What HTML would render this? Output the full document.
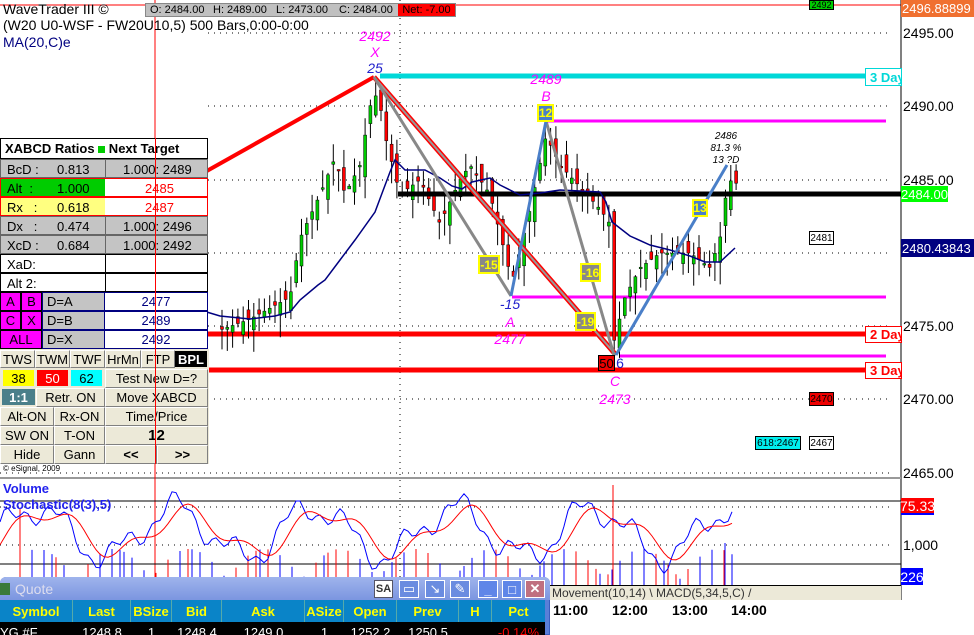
<!DOCTYPE html>
<html><head><meta charset="utf-8"><style>
*{margin:0;padding:0;box-sizing:border-box}
body{width:974px;height:635px;overflow:hidden;background:#fff;font-family:"Liberation Sans",Arial,sans-serif;position:relative}
.a{position:absolute;white-space:nowrap}
.c{position:absolute;display:flex;align-items:center;justify-content:center;font-size:13px;white-space:nowrap}
.btn{background:#ece9d8;border:1px solid;border-color:#fff #808080 #808080 #fff;color:#000}
.pl{position:absolute;left:0;width:208px;font-size:13px}
.ax{position:absolute;left:903px;font-size:14px;color:#000}
</style></head><body>
<svg class="a" style="left:0;top:0" width="974" height="635" id="sv">
<line x1="0" y1="5" x2="901" y2="5" stroke="#f00" stroke-width="1"/>
<line x1="901" y1="0" x2="901" y2="600" stroke="#000" stroke-width="1"/>
<line x1="0" y1="478" x2="901" y2="478" stroke="#999" stroke-width="2"/>
<line x1="155" y1="0" x2="155" y2="580" stroke="#f00" stroke-width="1"/>
<g stroke="#000" stroke-dasharray="1 5" stroke-width="1">
<line x1="208" y1="33" x2="890" y2="33"/><line x1="208" y1="106" x2="890" y2="106"/>
<line x1="208" y1="180" x2="890" y2="180"/><line x1="208" y1="253" x2="890" y2="253"/>
<line x1="208" y1="326" x2="890" y2="326"/><line x1="208" y1="399" x2="890" y2="399"/>
<line x1="0" y1="473" x2="890" y2="473"/>
<line x1="400" y1="0" x2="400" y2="585"/>
<line x1="0" y1="507" x2="890" y2="507"/><line x1="0" y1="545" x2="890" y2="545"/>
</g>
<line x1="0" y1="501" x2="901" y2="501" stroke="#000"/>
<line x1="0" y1="564" x2="901" y2="564" stroke="#000"/>
<line x1="380" y1="76" x2="866" y2="76" stroke="#00d8d8" stroke-width="5"/>
<line x1="545" y1="121" x2="886" y2="121" stroke="#f0f" stroke-width="3"/>
<line x1="512" y1="297" x2="886" y2="297" stroke="#f0f" stroke-width="3"/>
<line x1="620" y1="356" x2="886" y2="356" stroke="#f0f" stroke-width="3"/>
<line x1="0" y1="334" x2="866" y2="334" stroke="#f00" stroke-width="5"/>
<line x1="0" y1="370" x2="866" y2="370" stroke="#f00" stroke-width="5"/>
<g id="cand"></g>
<line x1="398" y1="194" x2="901" y2="194" stroke="#000" stroke-width="5"/>
<polyline fill="none" stroke="#000080" stroke-width="1.5" points="200,310 220,316 250,319 275,316 290,312 300,300 318,285 325,280 340,260 355,240 375,212 390,172 395,160 405,170 425,170 440,178 452,186 462,189 472,182 490,178 500,185 510,190 520,195 540,193 560,190 600,192 606,202 612,222 630,236 650,245 670,250 690,256 705,262 720,262 735,248"/>
<line x1="205" y1="172" x2="374" y2="77" stroke="#f00" stroke-width="4"/>
<line x1="374" y1="77" x2="616" y2="355" stroke="#f00" stroke-width="5"/>
<line x1="374" y1="77" x2="616" y2="355" stroke="#999" stroke-width="2"/>
<line x1="374" y1="77" x2="511" y2="296" stroke="#888" stroke-width="3"/>
<line x1="546" y1="121" x2="614" y2="355" stroke="#888" stroke-width="3"/>
<line x1="511" y1="296" x2="546" y2="121" stroke="#4a7fc8" stroke-width="3"/>
<line x1="616" y1="355" x2="727" y2="165" stroke="#4a7fc8" stroke-width="3"/>
<g id="stoch"></g>
<g font-family="Liberation Sans" font-style="italic" font-size="14" text-anchor="middle">
<text x="375" y="41" fill="#f0f">2492</text><text x="375" y="57" fill="#f0f">X</text><text x="375" y="73" fill="#22c">25</text>
<text x="546" y="84" fill="#f0f">2489</text><text x="546" y="101" fill="#f0f">B</text>
<text x="510" y="309" fill="#22c">-15</text><text x="510" y="327" fill="#f0f">A</text><text x="510" y="344" fill="#f0f">2477</text>
<text x="615" y="386" fill="#f0f">C</text><text x="615" y="404" fill="#f0f">2473</text>
<text x="620" y="368" fill="#22c" font-style="normal">6</text>
</g>
<g font-family="Liberation Sans" font-style="italic" font-size="10" text-anchor="middle" fill="#000">
<text x="726" y="139">2486</text><text x="726" y="151">81.3 %</text><text x="726" y="163">13 ?D</text>
</g>
</svg>
<div class="c" style="left:537px;top:104px;width:17px;height:18px;background:#4a7fc8;border:2px solid #ff0;color:#ff0;font-weight:bold;font-size:12px">12</div>
<div class="c" style="left:478px;top:255px;width:22px;height:19px;background:#888;border:2px solid #ff0;color:#ff0;font-weight:bold;font-size:12px">-15</div>
<div class="c" style="left:580px;top:263px;width:21px;height:19px;background:#888;border:2px solid #ff0;color:#ff0;font-weight:bold;font-size:12px">-16</div>
<div class="c" style="left:575px;top:312px;width:21px;height:19px;background:#888;border:2px solid #ff0;color:#ff0;font-weight:bold;font-size:12px">-19</div>
<div class="c" style="left:692px;top:199px;width:16px;height:18px;background:#4a7fc8;border:2px solid #ff0;color:#ff0;font-weight:bold;font-size:12px">13</div>
<div class="c" style="left:598px;top:355px;width:17px;height:16px;background:#e00;border:1px solid #000;color:#000;font-size:13px">50</div>
<div class="c" style="left:865px;top:68px;width:37px;height:18px;background:#fff;border:1px solid #00d8d8;color:#00d8d8;font-weight:bold;justify-content:flex-start;padding-left:4px;overflow:hidden">3 Day</div>
<div class="c" style="left:865px;top:326px;width:37px;height:17px;background:#fff;border:1px solid #f00;color:#f00;font-weight:bold;justify-content:flex-start;padding-left:4px;overflow:hidden">2 Day</div>
<div class="c" style="left:865px;top:362px;width:37px;height:17px;background:#fff;border:1px solid #f00;color:#f00;font-weight:bold;justify-content:flex-start;padding-left:4px;overflow:hidden">3 Day</div>
<div class="c" style="left:809px;top:0;width:25px;height:10px;background:#0c0;border:1px solid #000;font-size:9px;overflow:hidden">2492</div>
<div class="c" style="left:809px;top:231px;width:25px;height:14px;background:#fff;border:1px solid #000;font-size:10px">2481</div>
<div class="c" style="left:809px;top:392px;width:25px;height:14px;background:#e00;border:1px solid #000;font-size:10px">2470</div>
<div class="c" style="left:755px;top:436px;width:46px;height:14px;background:#0ee;border:1px solid #000;font-size:10px">618:2467</div>
<div class="c" style="left:809px;top:436px;width:25px;height:14px;background:#fff;border:1px solid #000;font-size:10px">2467</div>
<div class="c" style="left:901px;top:0;width:73px;height:17px;background:#f07030;color:#fff;font-size:13px;overflow:hidden;justify-content:flex-start;padding-left:1px">2496.88899</div>
<div class="ax" style="top:25px">2495.00</div>
<div class="ax" style="top:98px">2490.00</div>
<div class="ax" style="top:172px">2485.00</div>
<div class="c" style="left:901px;top:186px;width:47px;height:16px;background:#0f0;color:#fff;font-size:13px">2484.00</div>
<div class="c" style="left:901px;top:239px;width:73px;height:18px;background:#000080;color:#fff;font-size:13px;overflow:hidden;justify-content:flex-start;padding-left:1px">2480.43843</div>
<div class="ax" style="top:318px">2475.00</div>
<div class="ax" style="top:391px">2470.00</div>
<div class="ax" style="top:465px">2465.00</div>
<div class="c" style="left:901px;top:498px;width:33px;height:17px;background:#f00;color:#fff;font-size:14px;border-bottom:2px solid #00f">75.33</div>
<div class="ax" style="top:537px">1,000</div>
<div class="c" style="left:901px;top:568px;width:22px;height:17px;background:#00f;color:#fff;font-size:14px">226</div>
<div class="a" style="left:548px;top:585px;width:353px;height:15px;background:#ece9d8;border-top:1px solid #000;font-size:12px;color:#333;padding-left:4px;line-height:14px">Movement(10,14)&nbsp;\&nbsp;MACD(5,34,5,C)&nbsp;/</div>
<div class="a" style="left:553px;top:602px;font-size:14px;font-weight:bold">11:00</div>
<div class="a" style="left:612px;top:602px;font-size:14px;font-weight:bold">12:00</div>
<div class="a" style="left:672px;top:602px;font-size:14px;font-weight:bold">13:00</div>
<div class="a" style="left:731px;top:602px;font-size:14px;font-weight:bold">14:00</div>
<div class="a" style="left:3px;top:1px;font-size:14px">WaveTrader III ©</div>
<div class="a" style="left:145px;top:3px;width:311px;height:14px;background:#c0c0c0;border:1px solid #888;font-size:11px;line-height:12px"></div>
<div class="a" style="left:150px;top:4px;font-size:11px">O: 2484.00</div>
<div class="a" style="left:213px;top:4px;font-size:11px">H: 2489.00</div>
<div class="a" style="left:276px;top:4px;font-size:11px">L: 2473.00</div>
<div class="a" style="left:339px;top:4px;font-size:11px">C: 2484.00</div>
<div class="c" style="left:398px;top:4px;width:57px;height:12px;background:#f00;font-size:11px">Net: -7.00</div>
<div class="a" style="left:3px;top:17px;font-size:14px">(W20 U0-WSF - FW20U10,5) 500 Bars,0:00-0:00</div>
<div class="a" style="left:3px;top:34px;font-size:14px;color:#000080">MA(20,C)e</div>
<div class="a" style="left:3px;top:481px;font-size:13px;font-weight:bold;color:#22e">Volume</div>
<div class="a" style="left:3px;top:497px;font-size:13px;font-weight:bold;color:#22e">Stochastic(8(3),5)</div>
<div class="a" style="left:3px;top:464px;font-size:8px">© eSignal, 2009</div>
<div class="pl" style="top:138px;height:21px;background:#fff;border:1px solid #000;font-weight:bold;padding:2px 4px;font-size:13px">XABCD Ratios <span style="display:inline-block;width:7px;height:7px;background:#0c0"></span> Next Target</div>
<div class="pl" style="top:159px;height:19px;background:#c4c4c4;border:1px solid #666"><span class="a" style="left:6px;top:2px">BcD :</span><span class="a" style="left:56px;top:2px">0.813</span><span class="a" style="left:104px;top:-1px;width:104px;height:19px;border-left:1px solid #666"></span><span class="a" style="left:122px;top:2px">1.000: 2489</span></div>
<div class="pl" style="top:178px;height:19px;background:#fff;border:1px solid #f00"><span class="a" style="left:0;top:0;width:104px;height:17px;background:#0c0"></span><span class="a" style="left:6px;top:2px">Alt&nbsp; :</span><span class="a" style="left:56px;top:2px">1.000</span><span class="a" style="left:144px;top:2px;color:#f00">2485</span></div>
<div class="pl" style="top:197px;height:19px;background:#fff;border:1px solid #f00"><span class="a" style="left:0;top:0;width:104px;height:17px;background:#ffff80"></span><span class="a" style="left:6px;top:2px">Rx&nbsp;&nbsp; :</span><span class="a" style="left:56px;top:2px">0.618</span><span class="a" style="left:144px;top:2px;color:#f00">2487</span></div>
<div class="pl" style="top:216px;height:19px;background:#c4c4c4;border:1px solid #666"><span class="a" style="left:6px;top:2px">Dx&nbsp;&nbsp; :</span><span class="a" style="left:56px;top:2px">0.474</span><span class="a" style="left:104px;top:-1px;width:1px;height:19px;background:#666"></span><span class="a" style="left:122px;top:2px">1.000: 2496</span></div>
<div class="pl" style="top:235px;height:19px;background:#c4c4c4;border:1px solid #666"><span class="a" style="left:6px;top:2px">XcD :</span><span class="a" style="left:56px;top:2px">0.684</span><span class="a" style="left:104px;top:-1px;width:1px;height:19px;background:#666"></span><span class="a" style="left:122px;top:2px">1.000: 2492</span></div>
<div class="pl" style="top:254px;height:19px;background:#fff;border:1px solid #000"><span class="a" style="left:6px;top:2px">XaD:</span><span class="a" style="left:104px;top:-1px;width:1px;height:19px;background:#000"></span></div>
<div class="pl" style="top:273px;height:19px;background:#fff;border:1px solid #000"><span class="a" style="left:6px;top:2px">Alt 2:</span><span class="a" style="left:104px;top:-1px;width:1px;height:19px;background:#000"></span></div>
<div class="c" style="left:0;top:292px;width:21px;height:19px;background:#f0f;border:1px solid #000">A</div>
<div class="c" style="left:21px;top:292px;width:21px;height:19px;background:#f0f;border:1px solid #000">B</div>
<div class="c" style="left:0;top:311px;width:21px;height:19px;background:#f0f;border:1px solid #000">C</div>
<div class="c" style="left:21px;top:311px;width:21px;height:19px;background:#f0f;border:1px solid #000">X</div>
<div class="c" style="left:0;top:330px;width:42px;height:19px;background:#f0f;border:1px solid #000">ALL</div>
<div class="c" style="left:42px;top:292px;width:63px;height:19px;background:#c4c4c4;border:1px solid #000080;justify-content:flex-start;padding-left:4px">D=A</div>
<div class="c" style="left:42px;top:311px;width:63px;height:19px;background:#c4c4c4;border:1px solid #000080;justify-content:flex-start;padding-left:4px">D=B</div>
<div class="c" style="left:42px;top:330px;width:63px;height:19px;background:#c4c4c4;border:1px solid #000080;justify-content:flex-start;padding-left:4px">D=X</div>
<div class="c" style="left:104px;top:292px;width:104px;height:19px;background:#fff;border:1px solid #000080;color:#000080">2477</div>
<div class="c" style="left:104px;top:311px;width:104px;height:19px;background:#fff;border:1px solid #000080;color:#000080">2489</div>
<div class="c" style="left:104px;top:330px;width:104px;height:19px;background:#fff;border:1px solid #000080;color:#000080">2492</div>
<div class="a" style="left:0;top:349px;width:209px;height:115px;background:#ece9d8"></div>
<div class="c btn" style="left:0;top:350px;width:35px;height:18px">TWS</div>
<div class="c btn" style="left:35px;top:350px;width:35px;height:18px">TWM</div>
<div class="c btn" style="left:70px;top:350px;width:35px;height:18px">TWF</div>
<div class="c btn" style="left:105px;top:350px;width:36px;height:18px">HrMn</div>
<div class="c btn" style="left:141px;top:350px;width:34px;height:18px">FTP</div>
<div class="c" style="left:175px;top:351px;width:32px;height:16px;background:#000;color:#fff;font-weight:bold">BPL</div>
<div class="c" style="left:3px;top:370px;width:31px;height:16px;background:#ff0">38</div>
<div class="c" style="left:37px;top:370px;width:31px;height:16px;background:#f00;color:#fff">50</div>
<div class="c" style="left:71px;top:370px;width:31px;height:16px;background:#0ff">62</div>
<div class="c btn" style="left:105px;top:369px;width:103px;height:19px">Test New D=?</div>
<div class="c" style="left:2px;top:389px;width:33px;height:16px;background:#4a7f8a;color:#fff;font-weight:bold">1:1</div>
<div class="c btn" style="left:36px;top:388px;width:69px;height:19px">Retr. ON</div>
<div class="c btn" style="left:105px;top:388px;width:103px;height:19px">Move XABCD</div>
<div class="c btn" style="left:0;top:407px;width:54px;height:19px">Alt-ON</div>
<div class="c btn" style="left:54px;top:407px;width:51px;height:19px">Rx-ON</div>
<div class="c btn" style="left:105px;top:407px;width:103px;height:19px">Time/Price</div>
<div class="c btn" style="left:0;top:426px;width:54px;height:19px">SW ON</div>
<div class="c btn" style="left:54px;top:426px;width:51px;height:19px">T-ON</div>
<div class="c btn" style="left:105px;top:426px;width:103px;height:19px;font-weight:bold;font-size:15px">12</div>
<div class="c btn" style="left:0;top:445px;width:54px;height:19px">Hide</div>
<div class="c btn" style="left:54px;top:445px;width:51px;height:19px">Gann</div>
<div class="c btn" style="left:105px;top:445px;width:52px;height:19px;font-weight:bold">&lt;&lt;</div>
<div class="c btn" style="left:157px;top:445px;width:51px;height:19px;font-weight:bold">&gt;&gt;</div>
<div class="a" style="left:155px;top:138px;width:1px;height:326px;background:#f00"></div>
<div class="a" style="left:0;top:577px;width:550px;height:58px;background:#5a7fd8;border-radius:6px 6px 0 0;border:1px solid #3a5fc0"></div>
<div class="a" style="left:0;top:577px;width:550px;height:23px;background:linear-gradient(#9fb4ec,#7b95e0);border-radius:6px 6px 0 0"></div>
<div class="a" style="left:0;top:583px;width:10px;height:12px;background:#3a7a3a"></div>
<div class="a" style="left:15px;top:581px;font-size:14px;color:#dde">Quote</div>
<div class="c" style="left:374px;top:580px;width:19px;height:18px;background:#fff;color:#333;font-weight:bold;font-size:11px;border:1px solid #556">SA</div>
<div class="c" style="left:399px;top:580px;width:20px;height:18px;background:#6a8ce0;border:1px solid #fff;color:#fff">▭</div>
<div class="c" style="left:425px;top:580px;width:20px;height:18px;background:#6a8ce0;border:1px solid #fff;color:#fff">↘</div>
<div class="c" style="left:450px;top:580px;width:20px;height:18px;background:#6a8ce0;border:1px solid #fff;color:#fff">✎</div>
<div class="c" style="left:478px;top:580px;width:20px;height:18px;background:#5f86e8;border:1px solid #fff;color:#fff;font-weight:bold">_</div>
<div class="c" style="left:502px;top:580px;width:20px;height:18px;background:#5f86e8;border:1px solid #fff;color:#fff">□</div>
<div class="c" style="left:525px;top:580px;width:20px;height:18px;background:#c07080;border:1px solid #fff;color:#fff;font-weight:bold">✕</div>
<div class="a" style="left:0;top:600px;width:545px;height:22px;background:#0a84c8;display:flex;font-weight:bold;font-size:13px;color:#ff0">
<div class="c" style="position:relative;width:73px;height:22px;border-right:1px solid #5aa">Symbol</div>
<div class="c" style="position:relative;width:58px;height:22px;border-right:1px solid #5aa">Last</div>
<div class="c" style="position:relative;width:41px;height:22px;border-right:1px solid #5aa">BSize</div>
<div class="c" style="position:relative;width:50px;height:22px;border-right:1px solid #5aa">Bid</div>
<div class="c" style="position:relative;width:83px;height:22px;border-right:1px solid #5aa">Ask</div>
<div class="c" style="position:relative;width:39px;height:22px;border-right:1px solid #5aa">ASize</div>
<div class="c" style="position:relative;width:53px;height:22px;border-right:1px solid #5aa">Open</div>
<div class="c" style="position:relative;width:62px;height:22px;border-right:1px solid #5aa">Prev</div>
<div class="c" style="position:relative;width:33px;height:22px;border-right:1px solid #5aa">H</div>
<div class="c" style="position:relative;width:53px;height:22px">Pct</div>
</div>
<div class="a" style="left:0;top:622px;width:545px;height:13px;background:#000;display:flex;font-size:12px;color:#fff;overflow:hidden">
<div class="c" style="position:relative;width:73px;height:20px;justify-content:flex-start">YG #F</div>
<div class="c" style="position:relative;width:58px;height:20px">1248.8</div>
<div class="c" style="position:relative;width:41px;height:20px">1</div>
<div class="c" style="position:relative;width:50px;height:20px">1248.4</div>
<div class="c" style="position:relative;width:83px;height:20px">1249.0</div>
<div class="c" style="position:relative;width:39px;height:20px">1</div>
<div class="c" style="position:relative;width:53px;height:20px">1252.2</div>
<div class="c" style="position:relative;width:62px;height:20px">1250.5</div>
<div class="c" style="position:relative;width:33px;height:20px"></div>
<div class="c" style="position:relative;width:53px;height:20px;color:#f00">-0.14%</div>
</div>
<script>
function Y(p){return 33+(2495-p)*14.67;}
var kp=[[210,2474.5],[250,2475.5],[290,2477],[300,2481],[320,2484],[335,2486.5],[345,2484],[360,2486],[370,2490],[378,2491],[385,2488],[400,2484],[420,2485],[440,2482],[460,2485],[470,2486],[490,2484],[505,2480],[512,2478],[530,2483],[546,2488],[560,2486],[580,2484.5],[600,2483],[610,2482],[614,2474],[625,2477],[640,2479],[660,2480],[690,2480],[710,2479],[720,2481],[728,2485],[745,2484.5]];
function pr(x){for(var i=0;i<kp.length-1;i++){if(x>=kp[i][0]&&x<=kp[i+1][0]){var t=(x-kp[i][0])/(kp[i+1][0]-kp[i][0]);return kp[i][1]+t*(kp[i+1][1]-kp[i][1]);}}return kp[kp.length-1][1];}
var g=document.getElementById("cand"),h="";
for(var x=222;x<=737;x+=5.3){var c=pr(x),o=pr(x-5.3)+Math.sin(x*1.7)*0.8,up=c>=o,hi=Math.max(o,c)+Math.abs(Math.sin(x*0.9))*1.2,lo=Math.min(o,c)-Math.abs(Math.cos(x*1.3))*1.5;
h+='<line x1="'+x+'" x2="'+x+'" y1="'+Y(hi)+'" y2="'+Y(lo)+'" stroke="#000" stroke-width="1"/>';
var t=Y(Math.max(o,c)),b=Y(Math.min(o,c));if(b-t<1.5)b=t+1.5;
h+='<rect x="'+(x-1.5)+'" y="'+t+'" width="3" height="'+(b-t)+'" fill="'+(up?'#0c0':'#f00')+'" stroke="#000" stroke-width="0.5"/>';}
g.innerHTML=h;
var s=document.getElementById("stoch"),b1="",r1="",v="";
for(var x=0;x<=735;x+=4){var yb=532-24*Math.sin(x*0.045)-12*Math.sin(x*0.11+1)-6*Math.sin(x*0.3);
var yr=532-20*Math.sin((x-12)*0.045)-8*Math.sin((x-12)*0.11+1);
b1+=x+","+Math.max(488,Math.min(575,yb))+" ";r1+=x+","+Math.max(490,Math.min(572,yr))+" ";
if(x>20&&Math.sin(x*7.3)>0.2){var hh=6+Math.abs(Math.sin(x*3.1))*30;v+='<line x1="'+x+'" x2="'+x+'" y1="585" y2="'+(585-hh)+'" stroke="'+(Math.sin(x*2.2)>0?'#00f':'#f00')+'"/>';}}
v+='<line x1="613" x2="613" y1="585" y2="485" stroke="#f00"/><line x1="725" x2="725" y1="585" y2="543" stroke="#00f"/><line x1="20" x2="20" y1="585" y2="508" stroke="#f00"/>';
s.innerHTML=v+'<polyline fill="none" stroke="#00f" points="'+b1+'"/><polyline fill="none" stroke="#f00" points="'+r1+'"/>';
</script>
</body></html>
